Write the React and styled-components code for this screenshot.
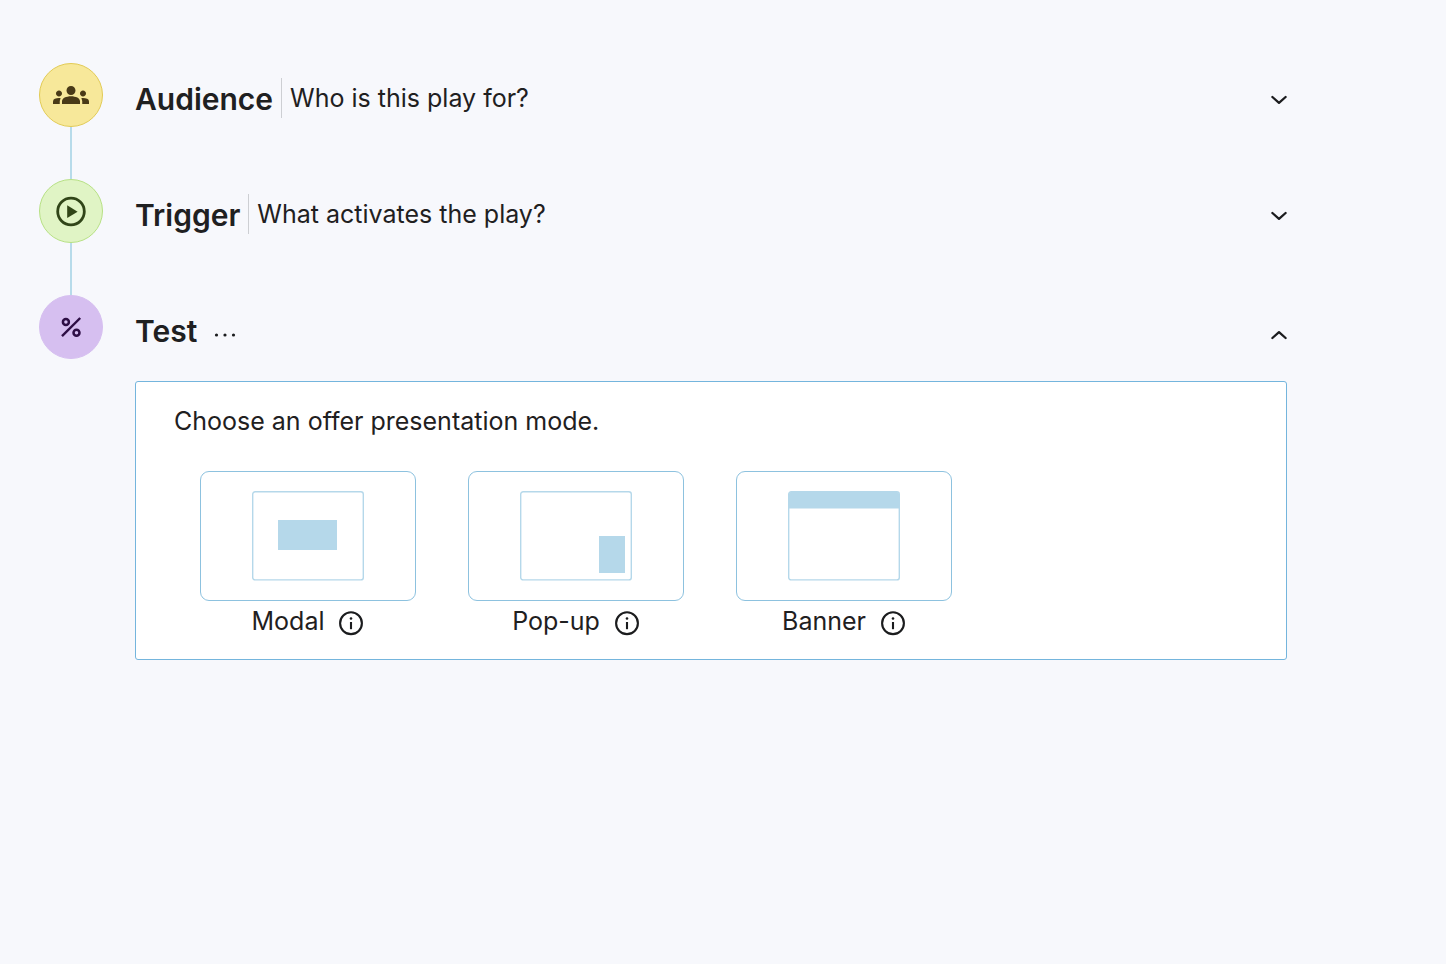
import React, { useState } from "react";
import styled, { createGlobalStyle } from "styled-components";
import { MdGroups } from "react-icons/md";

const GlobalStyle = createGlobalStyle`
  *, *::before, *::after { box-sizing: border-box; }
  body {
    margin: 0;
    background: #f7f8fc;
    color: #1f2021;
    font-family: Inter, "Liberation Sans", sans-serif;
  }
  button { font: inherit; color: inherit; cursor: pointer; }
  svg { display: block; }
`;

const Page = styled.main`
  padding: 63px 159px 63px 39px;
`;

const Step = styled.section`
  display: flex;
  gap: 32px;
`;

const Rail = styled.div`
  display: flex;
  flex-direction: column;
  align-items: center;
  flex: none;
`;

const Badge = styled.div`
  display: flex;
  align-items: center;
  justify-content: center;
  width: 64px;
  height: 64px;
  border: 1px solid ${(p) => p.$border};
  border-radius: 50%;
  background: ${(p) => p.$fill};
  color: ${(p) => p.$ink};
`;

const Connector = styled.div`
  width: 2px;
  height: 52px;
  background: #b7dbea;
`;

const Body = styled.div`
  flex: 1;
  min-width: 0;
  padding-top: 15px;
`;

const Header = styled.header`
  display: flex;
  align-items: center;
  height: 40px;
`;

const Title = styled.h2`
  margin: 0;
  padding: 2px 8px 0 0;
  font-size: 30px;
  line-height: 40px;
  font-weight: 600;
`;

const Question = styled.p`
  margin: 0;
  padding-left: 8px;
  border-left: 1px solid #cdcfd3;
  font-size: 25px;
  line-height: 40px;
`;

const IconButton = styled.button`
  display: flex;
  flex: none;
  padding: 0;
  border: 0;
  background: none;
`;

const Toggle = styled(IconButton)`
  margin-left: auto;
  padding-top: ${(p) => (p.$open ? 10 : 4)}px;
`;

const MoreButton = styled(IconButton)`
  margin-left: 8px;
  padding-top: 10px;
`;

const Panel = styled.div`
  margin-top: 31px;
  padding: 19px 38px 18px;
  border: 1px solid #74b5dd;
  border-radius: 3px;
  background: #fff;
`;

const Prompt = styled.p`
  margin: 0;
  font-size: 25px;
  line-height: 40px;
`;

const Modes = styled.div`
  display: flex;
  flex-wrap: wrap;
  gap: 20px 52px;
  padding: 30px 26px 0;
`;

const Mode = styled.div`
  display: flex;
  flex-direction: column;
  width: 216px;
`;

const ModeCard = styled.button`
  display: flex;
  align-items: center;
  justify-content: center;
  height: 130px;
  padding: 0;
  border: 1px solid #8dc2df;
  border-radius: 9px;
  background: #fff;
`;

const ModeCaption = styled.div`
  display: flex;
  align-items: center;
  justify-content: center;
  gap: 14px;
  height: 40px;
  font-size: 25px;
  line-height: 40px;
`;

const InfoButton = styled(IconButton)`
  padding-top: 4px;
`;

function PlayIcon() {
  return (
    <svg width="32" height="32" viewBox="0 0 32 32" aria-hidden="true">
      <circle cx="16" cy="16.5" r="13.3" fill="none" stroke="currentColor" strokeWidth="2.8" />
      <path d="M12.2 10.3v12.8L22.6 16.7z" fill="currentColor" />
    </svg>
  );
}

function PercentIcon() {
  return (
    <svg width="22" height="22" viewBox="0 0 22 22" fill="none" stroke="currentColor" aria-hidden="true">
      <path d="M2 20.2L20.2 2" strokeWidth="2.4" />
      <circle cx="5.9" cy="5.9" r="3" strokeWidth="2.5" />
      <circle cx="16.5" cy="16.7" r="3" strokeWidth="2.5" />
    </svg>
  );
}

function ChevronIcon({ up }) {
  return (
    <svg width="16" height="16" viewBox="0 0 16 16" fill="none" stroke="#1b1c1e" strokeWidth="2.3" strokeLinecap="round" strokeLinejoin="round" aria-hidden="true">
      <path d={up ? "M1.4 11L8 5.2L14.6 11" : "M1.4 5L8 10.8L14.6 5"} />
    </svg>
  );
}

function MoreIcon() {
  return (
    <svg width="24" height="8" viewBox="0 0 24 8" fill="#1b1c1e" aria-hidden="true">
      <circle cx="3.5" cy="4" r="1.6" />
      <circle cx="12" cy="4" r="1.6" />
      <circle cx="20.5" cy="4" r="1.6" />
    </svg>
  );
}

function InfoIcon() {
  return (
    <svg width="26" height="26" viewBox="0 0 26 26" aria-hidden="true">
      <circle cx="13" cy="13.2" r="10.9" fill="none" stroke="#1b1c1e" strokeWidth="2.1" />
      <path d="M13 12v7.2" stroke="#1b1c1e" strokeWidth="2.1" />
      <circle cx="13" cy="8.5" r="1.3" fill="#1b1c1e" />
    </svg>
  );
}

const overlays = {
  modal: <rect x="26" y="29" width="59" height="30" fill="#b5d8ea" />,
  popup: <rect x="79" y="45" width="26" height="37" fill="#b5d8ea" />,
  banner: <path d="M1 17.5V3a2 2 0 0 1 2-2h106a2 2 0 0 1 2 2v14.5z" fill="#b5d8ea" />,
};

function Preview({ kind }) {
  return (
    <svg width="112" height="90" viewBox="0 0 112 90" aria-hidden="true">
      <rect x="0.7" y="0.7" width="110.6" height="88.2" rx="2.5" fill="#fff" stroke="#b5d8ea" strokeWidth="1.4" />
      {overlays[kind]}
    </svg>
  );
}

const modes = [
  { id: "modal", label: "Modal" },
  { id: "popup", label: "Pop-up" },
  { id: "banner", label: "Banner" },
];

const steps = [
  {
    id: "audience",
    title: "Audience",
    question: "Who is this play for?",
    icon: <MdGroups size={36} aria-hidden="true" />,
    colors: { $fill: "#f7e89a", $border: "#e2cb55", $ink: "#493a17" },
  },
  {
    id: "trigger",
    title: "Trigger",
    question: "What activates the play?",
    icon: <PlayIcon />,
    colors: { $fill: "#e0f4c5", $border: "#b7e184", $ink: "#304518" },
  },
  {
    id: "test",
    title: "Test",
    icon: <PercentIcon />,
    colors: { $fill: "#d6bff0", $border: "#d6bff0", $ink: "#2e0f45" },
  },
];

function ModePicker() {
  return (
    <Panel>
      <Prompt>Choose an offer presentation mode.</Prompt>
      <Modes>
        {modes.map(({ id, label }) => (
          <Mode key={id}>
            <ModeCard type="button" aria-labelledby={`${id}-label`}>
              <Preview kind={id} />
            </ModeCard>
            <ModeCaption>
              <span id={`${id}-label`}>{label}</span>
              <InfoButton type="button" aria-label={`About ${label}`}>
                <InfoIcon />
              </InfoButton>
            </ModeCaption>
          </Mode>
        ))}
      </Modes>
    </Panel>
  );
}

export default function App() {
  const [testOpen, setTestOpen] = useState(true);

  return (
    <>
      <GlobalStyle />
      <Page>
        {steps.map(({ id, title, question, icon, colors }, index) => {
          const isTest = id === "test";
          const open = isTest && testOpen;
          return (
            <Step key={id}>
              <Rail>
                <Badge {...colors}>{icon}</Badge>
                {index < steps.length - 1 && <Connector />}
              </Rail>
              <Body>
                <Header>
                  <Title>{title}</Title>
                  {question && <Question>{question}</Question>}
                  {isTest && (
                    <MoreButton type="button" aria-label="More options">
                      <MoreIcon />
                    </MoreButton>
                  )}
                  <Toggle
                    type="button"
                    $open={open}
                    aria-label={`Toggle ${title}`}
                    aria-expanded={open}
                    onClick={isTest ? () => setTestOpen(!testOpen) : undefined}
                  >
                    <ChevronIcon up={open} />
                  </Toggle>
                </Header>
                {open && <ModePicker />}
              </Body>
            </Step>
          );
        })}
      </Page>
    </>
  );
}
